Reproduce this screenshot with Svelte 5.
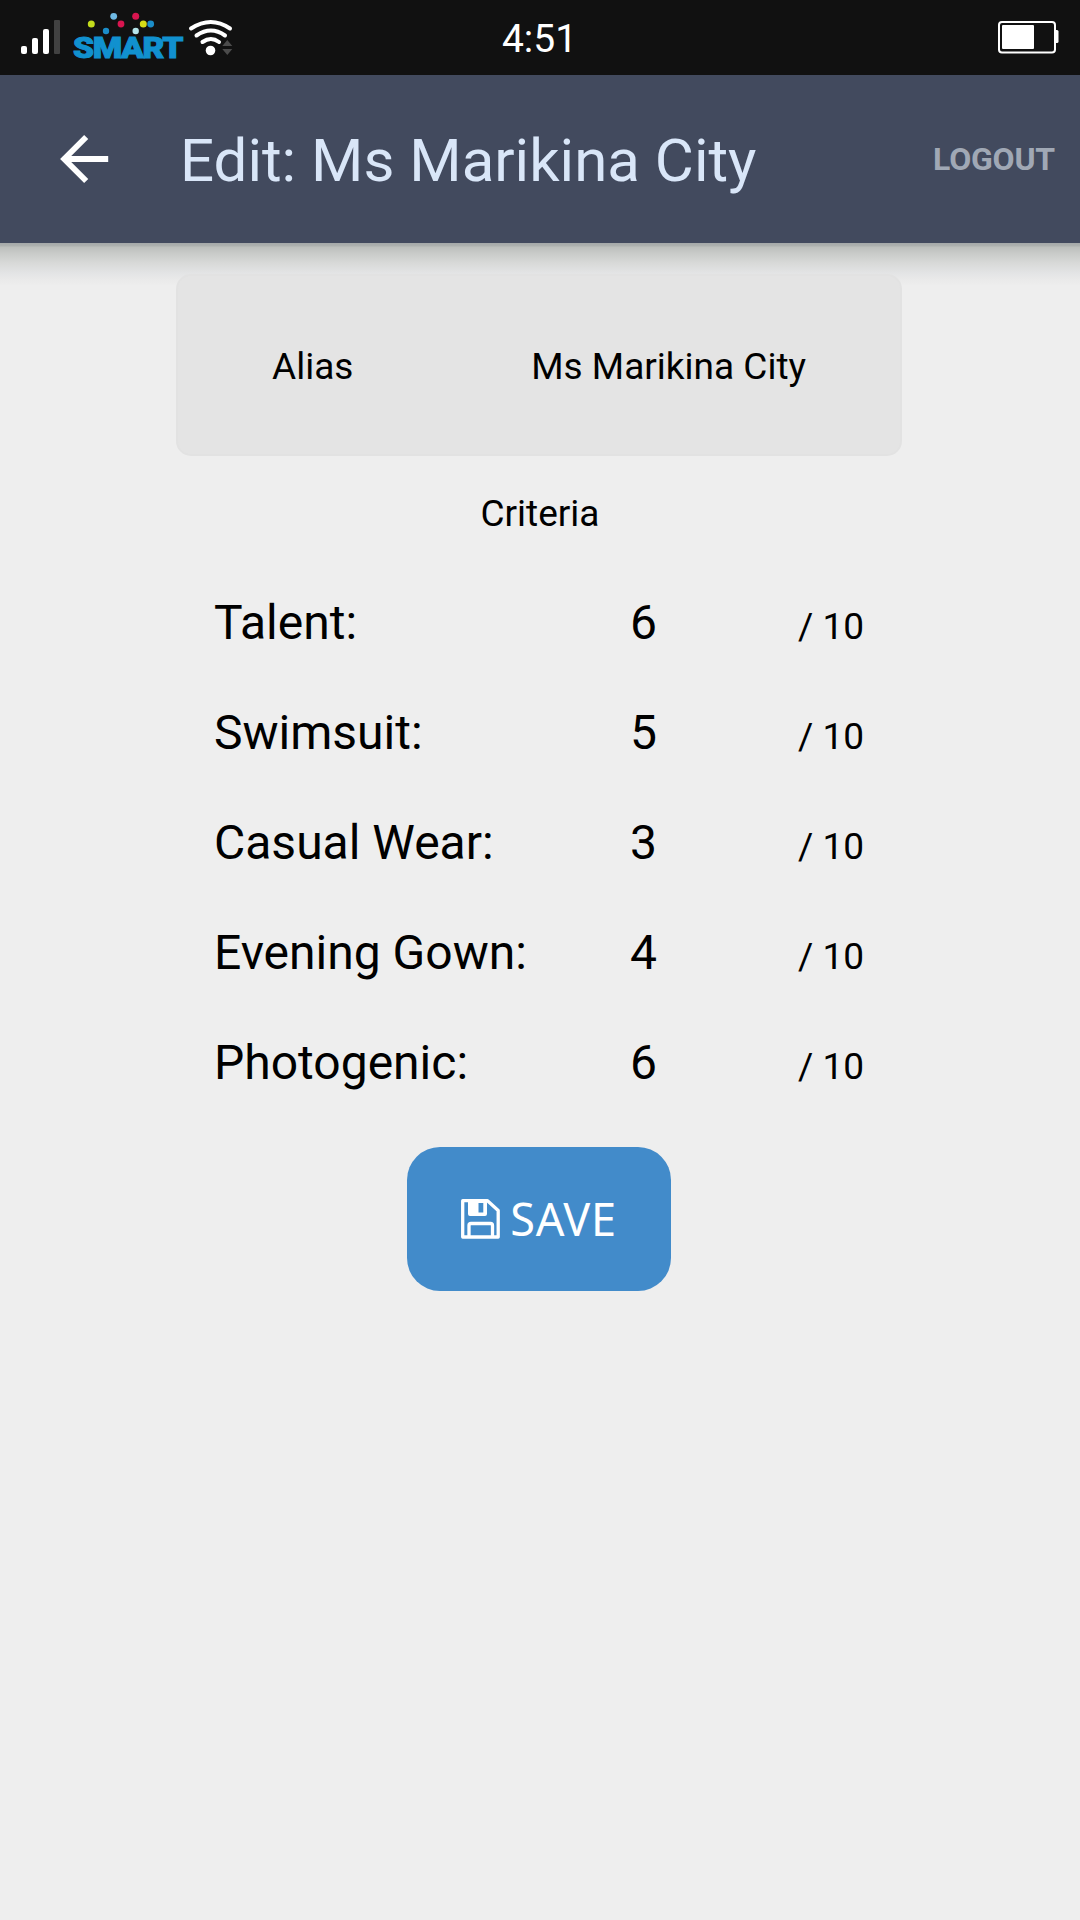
<script>
  const criteria = [
    { label: 'Talent:', score: 6 },
    { label: 'Swimsuit:', score: 5 },
    { label: 'Casual Wear:', score: 3 },
    { label: 'Evening Gown:', score: 4 },
    { label: 'Photogenic:', score: 6 }
  ];
</script>

<div class="screen">
  <div class="status">
    <svg class="network" width="250" height="75" viewBox="0 0 250 75">
      <g fill="#fff">
        <rect x="21" y="46" width="6" height="8" rx="2" />
        <rect x="32" y="38" width="6" height="16" rx="2" />
        <rect x="43" y="29" width="6" height="25" rx="2" />
        <rect x="54" y="20" width="6" height="34" rx="1" fill="#414141" />
      </g>
      <circle cx="91.3" cy="24" r="3.5" fill="#c4dc1c" />
      <circle cx="113.7" cy="16.3" r="3.4" fill="#6fb9e4" />
      <circle cx="121" cy="24" r="3.4" fill="#d8154f" />
      <circle cx="135.7" cy="16.3" r="3.5" fill="#d8154f" />
      <circle cx="143.3" cy="24" r="3.5" fill="#d6dc16" />
      <circle cx="150.7" cy="24" r="3.4" fill="#1b8dc8" />
      <circle cx="106" cy="31" r="3.2" fill="#1b8dc8" />
      <circle cx="135.7" cy="31" r="3.2" fill="#b5e5ea" />
      <text class="carrier" x="73" y="57.500" textLength="109" lengthAdjust="spacingAndGlyphs">SMART</text>
      <g fill="none" stroke="#fff" stroke-width="4" stroke-linecap="round">
        <path d="M191 28.500Q211 15.500 230 28.500" />
        <path d="M196.500 35.500Q211 25.500 225 35.500" />
        <path d="M202.500 42Q211 36 219 42" />
      </g>
      <circle cx="210.500" cy="50.500" r="4.800" fill="#fff" />
      <path d="M227.300 40L232.300 46H222.300ZM227.300 55L232.300 49H222.300Z" fill="#4b4b4b" />
    </svg>
    <div class="time">4:51</div>
    <svg class="battery" width="64" height="36" viewBox="0 0 64 36">
      <rect x="2" y="2" width="56" height="30.500" rx="3" fill="none" stroke="#fff" stroke-width="2" />
      <rect x="5" y="5" width="32" height="24" rx="1" fill="#fff" />
      <path d="M58 10h2a1.500 1.500 0 0 1 1.500 1.500v10a1.500 1.500 0 0 1-1.500 1.500h-2z" fill="#fff" />
    </svg>
  </div>

  <header>
    <svg class="back" width="50" height="50" viewBox="0 0 50 50">
      <path d="M27.200 3L5.200 25L27.200 47M4.500 25H49.200" fill="none" stroke="#fff" stroke-width="5.800" />
    </svg>
    <h1>Edit: Ms Marikina City</h1>
    <button class="logout">LOGOUT</button>
  </header>

  <main>
    <section class="card">
      <span>Alias</span>
      <span class="name">Ms Marikina City</span>
    </section>
    <h2>Criteria</h2>
    <div class="list">
      {#each criteria as c}
        <div class="row">
          <span class="label">{c.label}</span>
          <span class="score">{c.score}</span>
          <span class="max">/ 10</span>
        </div>
      {/each}
    </div>
    <button class="save">
      <svg width="39" height="40" viewBox="0 0 39 40">
        <path d="M1.700 1.700H26.500L37.200 11.500V38H1.700Z" fill="none" stroke="#fff" stroke-width="3.300" stroke-linejoin="round" />
        <path d="M7 1H26V15a2 2 0 0 1-2 2H9a2 2 0 0 1-2-2ZM17.500 4V13.500H22.300V4Z" fill="#fff" fill-rule="evenodd" />
        <path d="M8 38V26.500a2 2 0 0 1 2-2H29.500a2 2 0 0 1 2 2V38" fill="none" stroke="#fff" stroke-width="3.300" />
      </svg>
      <span>SAVE</span>
    </button>
  </main>
</div>

<style>
  :global(body) {
    margin: 0;
    background: #eeeeee;
  }
  .screen {
    width: 1080px;
    height: 1920px;
    overflow: hidden;
    background: #eeeeee;
    color: #000;
    font-family: Roboto, sans-serif;
  }
  button {
    border: 0;
    padding: 0;
    background: none;
    font-family: inherit;
  }
  .status {
    height: 75px;
    background: #111111;
    display: grid;
    grid-template-columns: 1fr auto 1fr;
  }
  .carrier {
    font: 900 29px Roboto, sans-serif;
    letter-spacing: -1.2px;
    fill: #1191cf;
    stroke: #1191cf;
    stroke-width: 1;
  }
  .time {
    padding-top: 16px;
    color: #fff;
    font-size: 39px;
    line-height: 46px;
    text-indent: -1px;
  }
  .battery {
    justify-self: end;
    margin: 20px 19px 0 0;
  }
  header {
    box-sizing: border-box;
    height: 168px;
    padding: 0 25px 0 59px;
    background: #424a5e;
    display: flex;
    align-items: center;
  }
  h1 {
    margin: 4px 0 0 71px;
    flex: 1;
    color: #d9e6f8;
    font-size: 60px;
    font-weight: 400;
    line-height: 72px;
    white-space: nowrap;
  }
  .logout {
    margin-top: 0;
    color: #a0a8b5;
    font-size: 32px;
    font-weight: 700;
    line-height: 38px;
    letter-spacing: -0.2px;
  }
  .back {
    margin-top: -1px;
  }
  main {
    height: 1677px;
    box-sizing: border-box;
    padding-top: 31px;
    display: flex;
    flex-direction: column;
    align-items: center;
    background: linear-gradient(#a5a9a9 0, #adb1af 3px, #bcbfbc 4px, #c8cac8 10px, #d8d9d8 20px, #e3e4e5 30px, #eaeaea 37px, #eeeeee 43px);
  }
  .card {
    box-sizing: border-box;
    width: 726px;
    height: 182px;
    margin-right: 2px;
    border: 2px solid #e2e2e2;
    border-radius: 15px;
    background: #e4e4e4;
    padding: 4px 94px 0;
    display: flex;
    justify-content: space-between;
    align-items: center;
    font-size: 37px;
    line-height: 44px;
  }
  h2 {
    margin: 36px 0 0;
    font-size: 37px;
    font-weight: 400;
    line-height: 44px;
  }
  .list {
    width: 652px;
    margin-top: 32px;
  }
  .row {
    height: 110px;
    display: grid;
    grid-template-columns: 416px 168px 1fr;
    align-items: baseline;
    line-height: 110px;
    font-size: 48px;
  }
  .max {
    font-size: 37px;
  }
  .save {
    width: 264px;
    height: 144px;
    margin: 29px 2px 0 0;
    border-radius: 33px;
    background: #428bca;
    color: #fff;
    display: flex;
    align-items: center;
    justify-content: center;
    gap: 10px;
    font: 45px/60px "Noto Sans", sans-serif;
    letter-spacing: 0.7px;
  }
</style>
